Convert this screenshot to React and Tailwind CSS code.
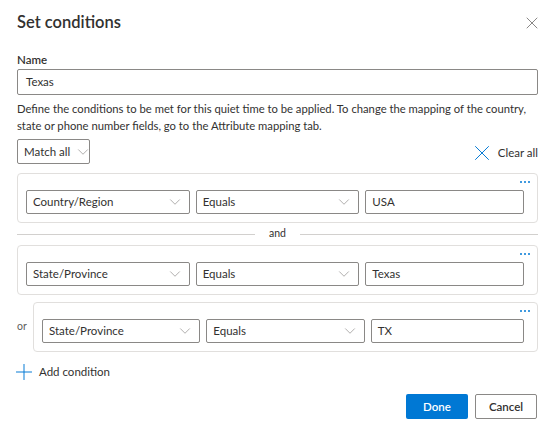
import { ChevronDown, Plus, X } from "lucide-react";

const Dropdown = ({ label }) => (
  <div className="flex-1 h-[24px] border border-[#8a8886] rounded-[2px] flex items-center justify-between pl-[6px] pr-[5px]">
    <span className="text-[11.5px] text-[#323130] whitespace-nowrap">{label}</span>
    <ChevronDown size={18} strokeWidth={0.9} className="text-[#8a8886] shrink-0" />
  </div>
);

const TextBox = ({ value }) => (
  <div className="flex-1 h-[24px] border border-[#8a8886] rounded-[2px] flex items-center pl-[6px]">
    <span className="text-[11.5px] text-[#323130]">{value}</span>
  </div>
);

const Dots = () => (
  <div className="flex justify-end gap-[2px] pr-[7px] h-[8px] items-center">
    <span className="w-[2px] h-[2px] rounded-full bg-[#0078d4]" />
    <span className="w-[2px] h-[2px] rounded-full bg-[#0078d4]" />
    <span className="w-[2px] h-[2px] rounded-full bg-[#0078d4]" />
  </div>
);

const ConditionCard = ({ field, op, value }) => (
  <div className="flex-1 border border-[#e1dfdd] rounded-[4px] pt-[4px] pb-[8px] pl-[8px]">
    <Dots />
    <div className="flex gap-[6px] mt-[4px] pr-[13px]">
      <Dropdown label={field} />
      <Dropdown label={op} />
      <TextBox value={value} />
    </div>
  </div>
);

export default function App() {
  return (
    <div className="w-[551px] h-[433px] bg-white pl-[17px] pr-[13px] font-['Lato'] text-[#323130]">
      <div className="h-[44px] flex items-center justify-between">
        <h1 className="text-[16.5px] font-semibold">Set conditions</h1>
        <X size={20} strokeWidth={0.9} className="text-[#605e5c] mt-[1px] -mr-[4px]" />
      </div>

      <div className="mt-[8px] text-[11.5px] font-semibold leading-[16px]">Name</div>
      <div className="mt-[1px] h-[26px] border border-[#8a8886] rounded-[2px] flex items-center pl-[8px]">
        <span className="text-[11.5px]">Texas</span>
      </div>

      <p className="mt-[5px] text-[11.25px] leading-[17px] text-[#323130]">
        Define the conditions to be met for this quiet time to be applied. To change the mapping of the country,
        state or phone number fields, go to the Attribute mapping tab.
      </p>

      <div className="mt-[5px] h-[25px] flex items-center justify-between">
        <div className="h-[25px] w-[73px] border border-[#8a8886] rounded-[2px] flex items-center gap-[4px] pl-[6px]">
          <span className="text-[11.5px] whitespace-nowrap">Match all</span>
          <ChevronDown size={18} strokeWidth={0.9} className="text-[#8a8886] shrink-0" />
        </div>
        <div className="flex items-center gap-[3px] mt-[2px]">
          <X size={26} strokeWidth={0.9} className="text-[#0078d4] -my-[6px]" />
          <span className="text-[11.5px]">Clear all</span>
        </div>
      </div>

      <div className="mt-[9px] flex">
        <ConditionCard field="Country/Region" op="Equals" value="USA" />
      </div>

      <div className="h-[22px] flex items-center gap-[14px]">
        <div className="flex-1 h-px bg-[#d2d0ce]" />
        <span className="text-[10.5px] text-[#323130]">and</span>
        <div className="flex-1 h-px bg-[#d2d0ce]" />
      </div>

      <div className="flex">
        <ConditionCard field="State/Province" op="Equals" value="Texas" />
      </div>

      <div className="mt-[7px] flex items-center">
        <span className="w-[16px] text-[10.5px] text-[#605e5c]">or</span>
        <ConditionCard field="State/Province" op="Equals" value="TX" />
      </div>

      <div className="mt-[11px] flex items-center gap-[2px] -ml-[6px]">
        <Plus size={26} strokeWidth={0.9} className="text-[#0078d4] -my-[6px]" />
        <span className="text-[11.5px]">Add condition</span>
      </div>

      <div className="mt-[14px] flex justify-end gap-[7px] pr-[1px]">
        <button className="h-[25px] w-[62px] rounded-[2px] bg-[#0078d4] text-white text-[11.5px] font-semibold">
          Done
        </button>
        <button className="h-[25px] w-[62px] rounded-[2px] border border-[#8a8886] bg-white text-[#323130] text-[11.5px] font-semibold">
          Cancel
        </button>
      </div>
    </div>
  );
}
